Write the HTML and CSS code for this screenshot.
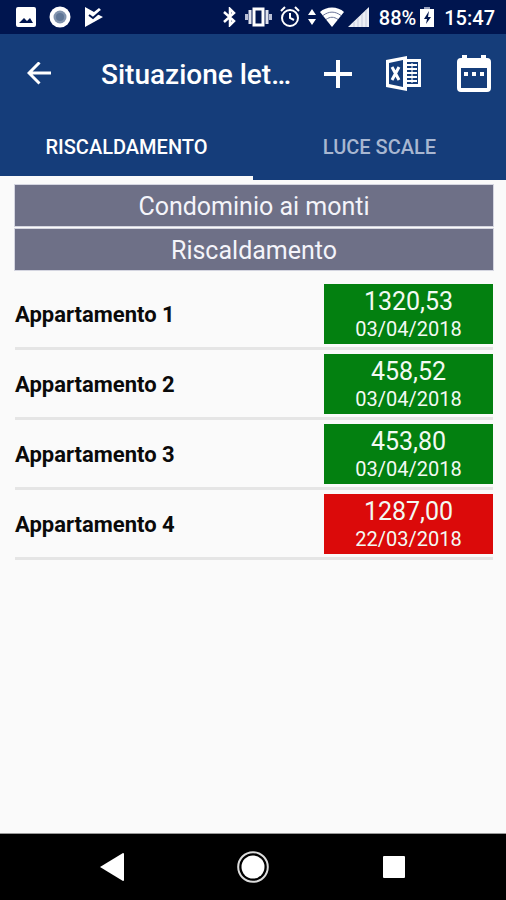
FILE: index.html
```html
<!DOCTYPE html>
<html lang="it">
<head>
<meta charset="utf-8">
<meta name="viewport" content="width=device-width, initial-scale=1">
<title>Situazione letture</title>
<link rel="stylesheet" href="styles.css">
</head>
<body>
<div class="status">
  <div class="status-group notices">
    <svg width="20" height="20" viewBox="0 0 20 20"><path fill="#fff" fill-rule="evenodd" d="M2 0h16a2 2 0 0 1 2 2v16a2 2 0 0 1-2 2H2a2 2 0 0 1-2-2V2a2 2 0 0 1 2-2zM3 16h14l-3-5-3 3-3-3z"/></svg>
    <svg width="22" height="22" viewBox="0 0 22 22"><circle cx="11" cy="11" r="10.500" fill="#fff"/><circle cx="11" cy="11" r="6.500" fill="#8294ae"/><circle cx="11" cy="11" r="4" fill="#617797"/></svg>
    <svg width="20" height="20" viewBox="0 0 20 20"><path fill="#fff" d="M1 0l9 5 5-4 2 2-4 4 6 3-18 10z"/><path d="M5 8l4 3 8-7" fill="none" stroke="#00154f" stroke-width="2"/></svg>
  </div>
  <div class="status-group">
    <svg width="14" height="20" viewBox="0 0 14 20"><path d="M1 5l10 9-4 4V2l4 4L1 15" fill="none" stroke="#fff" stroke-width="2.500"/></svg>
    <svg class="wide" width="27" height="20" viewBox="0 0 27 20"><path fill="none" stroke="#fff" stroke-width="3" d="M9 2h9v16H9z"/><path d="M5 3v14M22 3v14" stroke="#dfe2ee" stroke-width="3"/><path d="M1.500 7v6M25.500 7v6" stroke="#b9bfd5" stroke-width="3"/></svg>
    <svg class="wide" width="20" height="22" viewBox="0 0 20 22"><g fill="none" stroke="#fff" stroke-width="2"><circle cx="10" cy="12" r="8"/><path d="M10 7v5l4 2M1 5l4-4M19 5l-4-4"/></g></svg>
    <svg class="wide" width="8" height="18" viewBox="0 0 8 18"><path fill="#fff" d="M4 1l4 6H0zM0 11h8l-4 6z"/></svg>
    <svg class="tight" width="24" height="20" viewBox="0 0 24 20"><path fill="#fff" d="M0 5C6-1 18-1 24 5L12 20z"/><path d="M3 8.500c6-4.500 12-4.500 18 0M6 12.500c4-3 8-3 12 0" fill="none" stroke="#6c7599"/></svg>
    <svg class="tight" width="21" height="20" viewBox="0 0 21 20"><path fill="#eceef4" d="M0 20L21 0v20z"/><path d="M6 15v5M10 11v9M14 7v13M18 3v17" stroke="#c5cadb"/></svg>
    <span class="battery-level">88%</span>
    <svg class="tight" width="14" height="20" viewBox="0 0 14 20"><path fill="#fff" d="M0 2h14v18H0z"/><path fill="#9aa3bf" d="M4 0h6v2H4z"/><path fill="#00154f" d="M9 4l-5 8h3l-1 5 5-7H8z"/></svg>
    <span class="clock">15:47</span>
  </div>
</div>

<header class="header">
  <div class="toolbar">
    <button class="icon-button" aria-label="Indietro"><svg width="24" height="24" viewBox="0 0 24 24"><path d="M24 11H2M12.500 .5L2 11l10.500 10.500" fill="none" stroke="#fff" stroke-width="3"/></svg></button>
    <h1>Situazione let…</h1>
    <button class="icon-button" aria-label="Aggiungi"><svg width="28" height="28" viewBox="0 0 28 28"><path d="M14 0v28M0 14h28" stroke="#fff" stroke-width="4"/></svg></button>
    <button class="icon-button" aria-label="Esporta in Excel"><svg width="36" height="36" viewBox="0 0 36 36"><path fill="#fff" fill-rule="evenodd" d="M0 4L21 0v35L0 31zM3 7v21l14 3V4z"/><path fill="#fff" fill-rule="evenodd" d="M20 3h15v28H20zM20 6v22h12V6z"/><path d="M21 9h10M21 13h10M21 17h10M21 21h10M21 25h10" stroke="#fff" stroke-width="2"/><path d="M26 7v20" stroke="#fff"/><path d="M6 11l7 13M13 11l-7 13" stroke="#fff" stroke-width="3"/></svg></button>
    <button class="icon-button" aria-label="Calendario"><svg width="36" height="40" viewBox="0 0 36 40"><path fill="#fff" fill-rule="evenodd" d="M6 1h5v3h14V1h5v3h1a4 4 0 0 1 4 4v26a4 4 0 0 1-4 4H5a4 4 0 0 1-4-4V8a4 4 0 0 1 4-4h1zM5 14v20h26V14z"/><path fill="#fff" d="M8 18h4v4H8zM16 18h4v4h-4zM24 18h4v4h-4z"/></svg></button>
  </div>
  <div class="tabs" role="tablist">
    <button class="tab selected" role="tab" aria-selected="true">RISCALDAMENTO</button>
    <button class="tab" role="tab" aria-selected="false">LUCE SCALE</button>
  </div>
</header>

<main class="content">
  <h2 class="band">Condominio ai monti</h2>
  <h2 class="band">Riscaldamento</h2>
  <table class="readings">
    <tbody>
      <tr><th scope="row">Appartamento 1</th><td><div class="reading"><span class="value">1320,53</span><span class="date">03/04/2018</span></div></td></tr>
      <tr><th scope="row">Appartamento 2</th><td><div class="reading"><span class="value">458,52</span><span class="date">03/04/2018</span></div></td></tr>
      <tr><th scope="row">Appartamento 3</th><td><div class="reading"><span class="value">453,80</span><span class="date">03/04/2018</span></div></td></tr>
      <tr><th scope="row">Appartamento 4</th><td><div class="reading late"><span class="value">1287,00</span><span class="date">22/03/2018</span></div></td></tr>
    </tbody>
  </table>
</main>

<nav class="system-nav">
  <button aria-label="Indietro"><svg width="24" height="28" viewBox="0 0 24 28"><path fill="#fff" d="M0 14L23 0q1 0 1 1v26q0 1-1 1z"/></svg></button>
  <button aria-label="Home"><svg width="32" height="32" viewBox="0 0 32 32"><circle cx="16" cy="16" r="14.800" fill="none" stroke="#ddd" stroke-width="2"/><circle cx="16" cy="16" r="11.500" fill="#fff"/></svg></button>
  <button aria-label="Recenti"><svg width="22" height="22" viewBox="0 0 22 22"><rect width="22" height="22" rx="1" fill="#fff"/></svg></button>
</nav>
</body>
</html>
```
FILE: styles.css
```css
* {
  box-sizing: border-box;
}

body {
  margin: 0;
  min-height: 100vh;
  display: flex;
  flex-direction: column;
  background: #fafafa;
  color: #0a0a0a;
  font-family: Roboto, "Liberation Sans", sans-serif;
}

button {
  padding: 0;
  border: 0;
  background: none;
  color: inherit;
  font: inherit;
}

svg {
  display: block;
  flex: none;
}

.status {
  display: flex;
  justify-content: space-between;
  align-items: center;
  height: 34px;
  padding: 0 11px 0 16px;
  background: #00154f;
  color: #fff;
  font-size: 20px;
  font-weight: 500;
}

.status-group {
  display: flex;
  align-items: center;
}

.notices {
  gap: 13px;
}

.wide {
  margin-left: 8px;
}

.tight {
  margin-left: 4px;
}

.battery-level,
.clock {
  margin-left: 10px;
  padding-top: 2px;
  line-height: 32px;
}

.header {
  background: #153d7a;
  color: #fff;
}

.toolbar {
  display: flex;
  align-items: center;
  height: 80px;
  padding: 0 14px 0 27px;
}

.toolbar h1 {
  flex: 1;
  min-width: 0;
  margin: 0 0 0 50px;
  padding-top: 2px;
  overflow: hidden;
  white-space: nowrap;
  font-size: 28px;
  line-height: 36px;
  font-weight: 500;
}

.icon-button + .icon-button {
  margin-left: 34px;
}

.tabs {
  display: grid;
  grid-template-columns: 1fr 1fr;
}

.tab {
  height: 66px;
  border-top: 4px solid transparent;
  border-bottom: 4px solid transparent;
  color: #a8b7d1;
  font-size: 20px;
  font-weight: 500;
}

.tab.selected {
  border-bottom-color: #fafafa;
  color: #fff;
}

.content {
  flex: 1;
  padding: 5px 13px 0 15px;
}

.band {
  margin: 0 0 3px;
  padding-top: 3px;
  background: #6e7087;
  box-shadow: 0 0 0 1px #d4d5e0;
  color: #f4f4fa;
  text-align: center;
  font-size: 25px;
  line-height: 38px;
  font-weight: 400;
}

.readings {
  width: 100%;
  margin-top: 10px;
  border-collapse: separate;
  border-spacing: 0;
}

.readings th,
.readings td {
  padding: 4px 0 3px;
  border-bottom: 3px solid #e5e5e5;
}

.readings th {
  text-align: left;
  font-size: 22px;
  font-weight: 700;
}

.readings td {
  width: 169px;
}

.reading {
  display: flex;
  flex-direction: column;
  height: 60px;
  padding-top: 4px;
  background: #038010;
  color: #f3faf3;
  text-align: center;
}

.reading.late {
  background: #db0a0a;
}

.value {
  font-size: 25px;
  line-height: 28px;
}

.date {
  font-size: 20px;
  line-height: 26px;
}

.system-nav {
  display: grid;
  grid-template-columns: repeat(3, 1fr);
  height: 67px;
  padding: 0 42px;
  border-top: 1px solid #999;
  background: #000;
}

.system-nav button {
  display: flex;
  align-items: center;
  justify-content: center;
}
```
